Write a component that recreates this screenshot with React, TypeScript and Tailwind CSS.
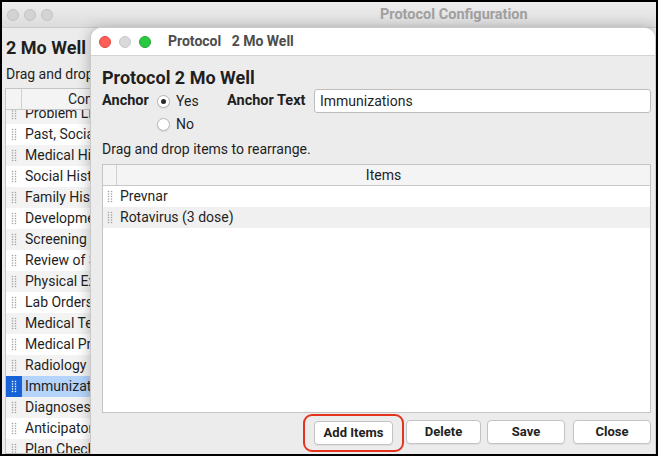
import React from 'react';

const sections = [
  'Problem List',
  'Past, Social History',
  'Medical History',
  'Social History',
  'Family History',
  'Development',
  'Screening Orders',
  'Review of Systems',
  'Physical Exam',
  'Lab Orders',
  'Medical Tests',
  'Medical Procedures',
  'Radiology Orders',
  'Immunizations',
  'Diagnoses',
  'Anticipatory Guidance',
  'Plan Check',
];

const protocolItems = ['Prevnar', 'Rotavirus (3 dose)'];

// little 2x5 dotted grip shown in the first column of each row
const Grip: React.FC<{ light?: boolean }> = ({ light }) => (
  <svg width="6" height="13" viewBox="0 0 6 13">
    {[1.5, 4, 6.5, 9, 11.5].map((y) =>
      [1.5, 4.5].map((x) => (
        <circle key={`${x}-${y}`} cx={x} cy={y} r="0.8" fill={light ? '#ffffff' : '#a3a3a3'} />
      ))
    )}
  </svg>
);

const Radio: React.FC<{ checked?: boolean }> = ({ checked }) => (
  <span className="w-[13px] h-[13px] rounded-full border border-[#b5b5b5] bg-white flex items-center justify-center shadow-[0_1px_1px_rgba(0,0,0,0.08)]">
    {checked && <span className="w-[5px] h-[5px] rounded-full bg-[#2a2a2a]" />}
  </span>
);

const Button: React.FC<{ label: string; className?: string }> = ({ label, className }) => (
  <button
    className={`h-[24px] bg-white border border-[#c3c3c3] rounded-[4px] text-[13px] font-bold text-[#222] shadow-[0_1px_1px_rgba(0,0,0,0.06)] ${className ?? ''}`}
  >
    {label}
  </button>
);

export default function App() {
  return (
    <div className="relative w-[658px] h-[456px] border-2 border-black overflow-hidden bg-[#ececec] text-[#1f1f1f] font-['Roboto','Liberation_Sans',sans-serif]">
      {/* background window: Protocol Configuration */}
      <div className="flex flex-col h-full">
        <div className="h-[26px] flex items-center bg-gradient-to-b from-[#eeeeee] to-[#dcdcdc] border-b border-[#cacaca]">
          <div className="flex gap-[5px] pl-[5px]">
            <span className="w-3 h-3 rounded-full bg-[#d3d3d3] border border-[#c2c2c2]" />
            <span className="w-3 h-3 rounded-full bg-[#d3d3d3] border border-[#c2c2c2]" />
            <span className="w-3 h-3 rounded-full bg-[#d3d3d3] border border-[#c2c2c2]" />
          </div>
          <span className="ml-[327px] text-[14.5px] font-bold text-[#a0a0a0]">Protocol Configuration</span>
        </div>

        <div className="flex-1 px-[3px] flex flex-col min-h-0">
          <div className="mt-[10px] pl-[1px] text-[18px] leading-[20px] font-bold">2 Mo Well</div>
          <div className="mt-[8px] pl-[1px] text-[14px] leading-[16px]">Drag and drop items to rearrange.</div>
          <div className="mt-[6px] flex-1 flex flex-col min-h-0 border border-[#c4c4c4] bg-white">
            <div className="h-[21px] flex bg-[#f4f4f4] border-b border-[#c8c8c8] text-[14px]">
              <div className="w-[16px] border-r border-[#d0d0d0]" />
              <div className="pl-[46px] flex items-center">Content</div>
            </div>
            <div className="flex-1 overflow-hidden">
              <div className="-mt-[7px]">
                {sections.map((s, i) => {
                  const selected = s === 'Immunizations';
                  return (
                    <div
                      key={s}
                      className={`h-[21px] flex items-center text-[14px] whitespace-nowrap ${
                        selected ? 'bg-[#b4d4fb]' : i % 2 === 0 ? 'bg-[#f3f3f3]' : 'bg-white'
                      }`}
                    >
                      <div
                        className={`w-[16px] h-full flex items-center justify-center ${
                          selected ? 'bg-[#1662d6]' : ''
                        }`}
                      >
                        <Grip light={selected} />
                      </div>
                      <span className="pl-[3px]">{s}</span>
                    </div>
                  );
                })}
              </div>
            </div>
          </div>
        </div>
      </div>

      {/* dialog window: Protocol 2 Mo Well */}
      <div className="absolute left-[88px] top-[25px] right-[1px] bottom-[-10px] flex flex-col bg-[#ececec] rounded-t-[10px] border-l border-t border-[#c9c9c9] shadow-[0_2px_14px_rgba(0,0,0,0.28)]">
        <div className="h-[28px] flex items-center bg-white rounded-t-[10px] border-b border-[#d4d4d4]">
          <div className="flex gap-2 pl-[8px]">
            <span className="w-3 h-3 rounded-full bg-[#fe5f57] border border-[#e14640]" />
            <span className="w-3 h-3 rounded-full bg-[#d9d9d9] border border-[#c8c8c8]" />
            <span className="w-3 h-3 rounded-full bg-[#2ac840] border border-[#1fa933]" />
          </div>
          <span className="ml-[17px] text-[14px] font-bold text-[#4d4d4d] whitespace-pre">Protocol   2 Mo Well</span>
        </div>

        <div className="flex flex-col pl-[11px] pr-[4px]">
          <div className="mt-[12px] text-[18px] leading-[20px] font-bold">Protocol 2 Mo Well</div>

          <div className="mt-[1px] h-[24px] flex items-center text-[14px]">
            <span className="w-[55px] font-bold text-[14.5px]">Anchor</span>
            <Radio checked />
            <span className="ml-[6px] w-[51px]">Yes</span>
            <span className="w-[87px] font-bold text-[14.5px]">Anchor Text</span>
            <div className="flex-1 h-[24px] flex items-center bg-white border border-[#bdbdbd] rounded-[3px] px-[5px]">
              Immunizations
            </div>
          </div>

          <div className="h-[22px] flex items-center text-[14px]">
            <span className="w-[55px]" />
            <Radio />
            <span className="ml-[6px]">No</span>
          </div>

          <div className="mt-[6px] text-[14px] leading-[16px]">Drag and drop items to rearrange.</div>

          <div className="mt-[7px] h-[249px] flex flex-col border border-[#c4c4c4] bg-white">
            <div className="h-[21px] flex bg-[#f4f4f4] border-b border-[#c8c8c8] text-[14px]">
              <div className="w-[14px] border-r border-[#d0d0d0]" />
              <div className="flex-1 flex items-center justify-center">Items</div>
            </div>
            {protocolItems.map((item, i) => (
              <div
                key={item}
                className={`h-[21px] flex items-center text-[14px] ${i % 2 === 1 ? 'bg-[#f0f0f0]' : 'bg-white'}`}
              >
                <div className="w-[14px] flex items-center justify-center">
                  <Grip />
                </div>
                <span className="pl-[3px]">{item}</span>
              </div>
            ))}
          </div>

          <div className="mt-[7px] flex justify-end">
            <div className="relative">
              <Button label="Add Items" className="w-[79px]" />
              <div className="absolute -left-[11px] -right-[11px] -top-[6px] -bottom-[7px] rounded-[9px] border-2 border-[#e5341d] pointer-events-none" />
            </div>
            <Button label="Delete" className="ml-[13px] w-[75px]" />
            <Button label="Save" className="ml-[6px] w-[78px]" />
            <Button label="Close" className="ml-[8px] w-[78px]" />
          </div>
        </div>
      </div>
    </div>
  );
}
